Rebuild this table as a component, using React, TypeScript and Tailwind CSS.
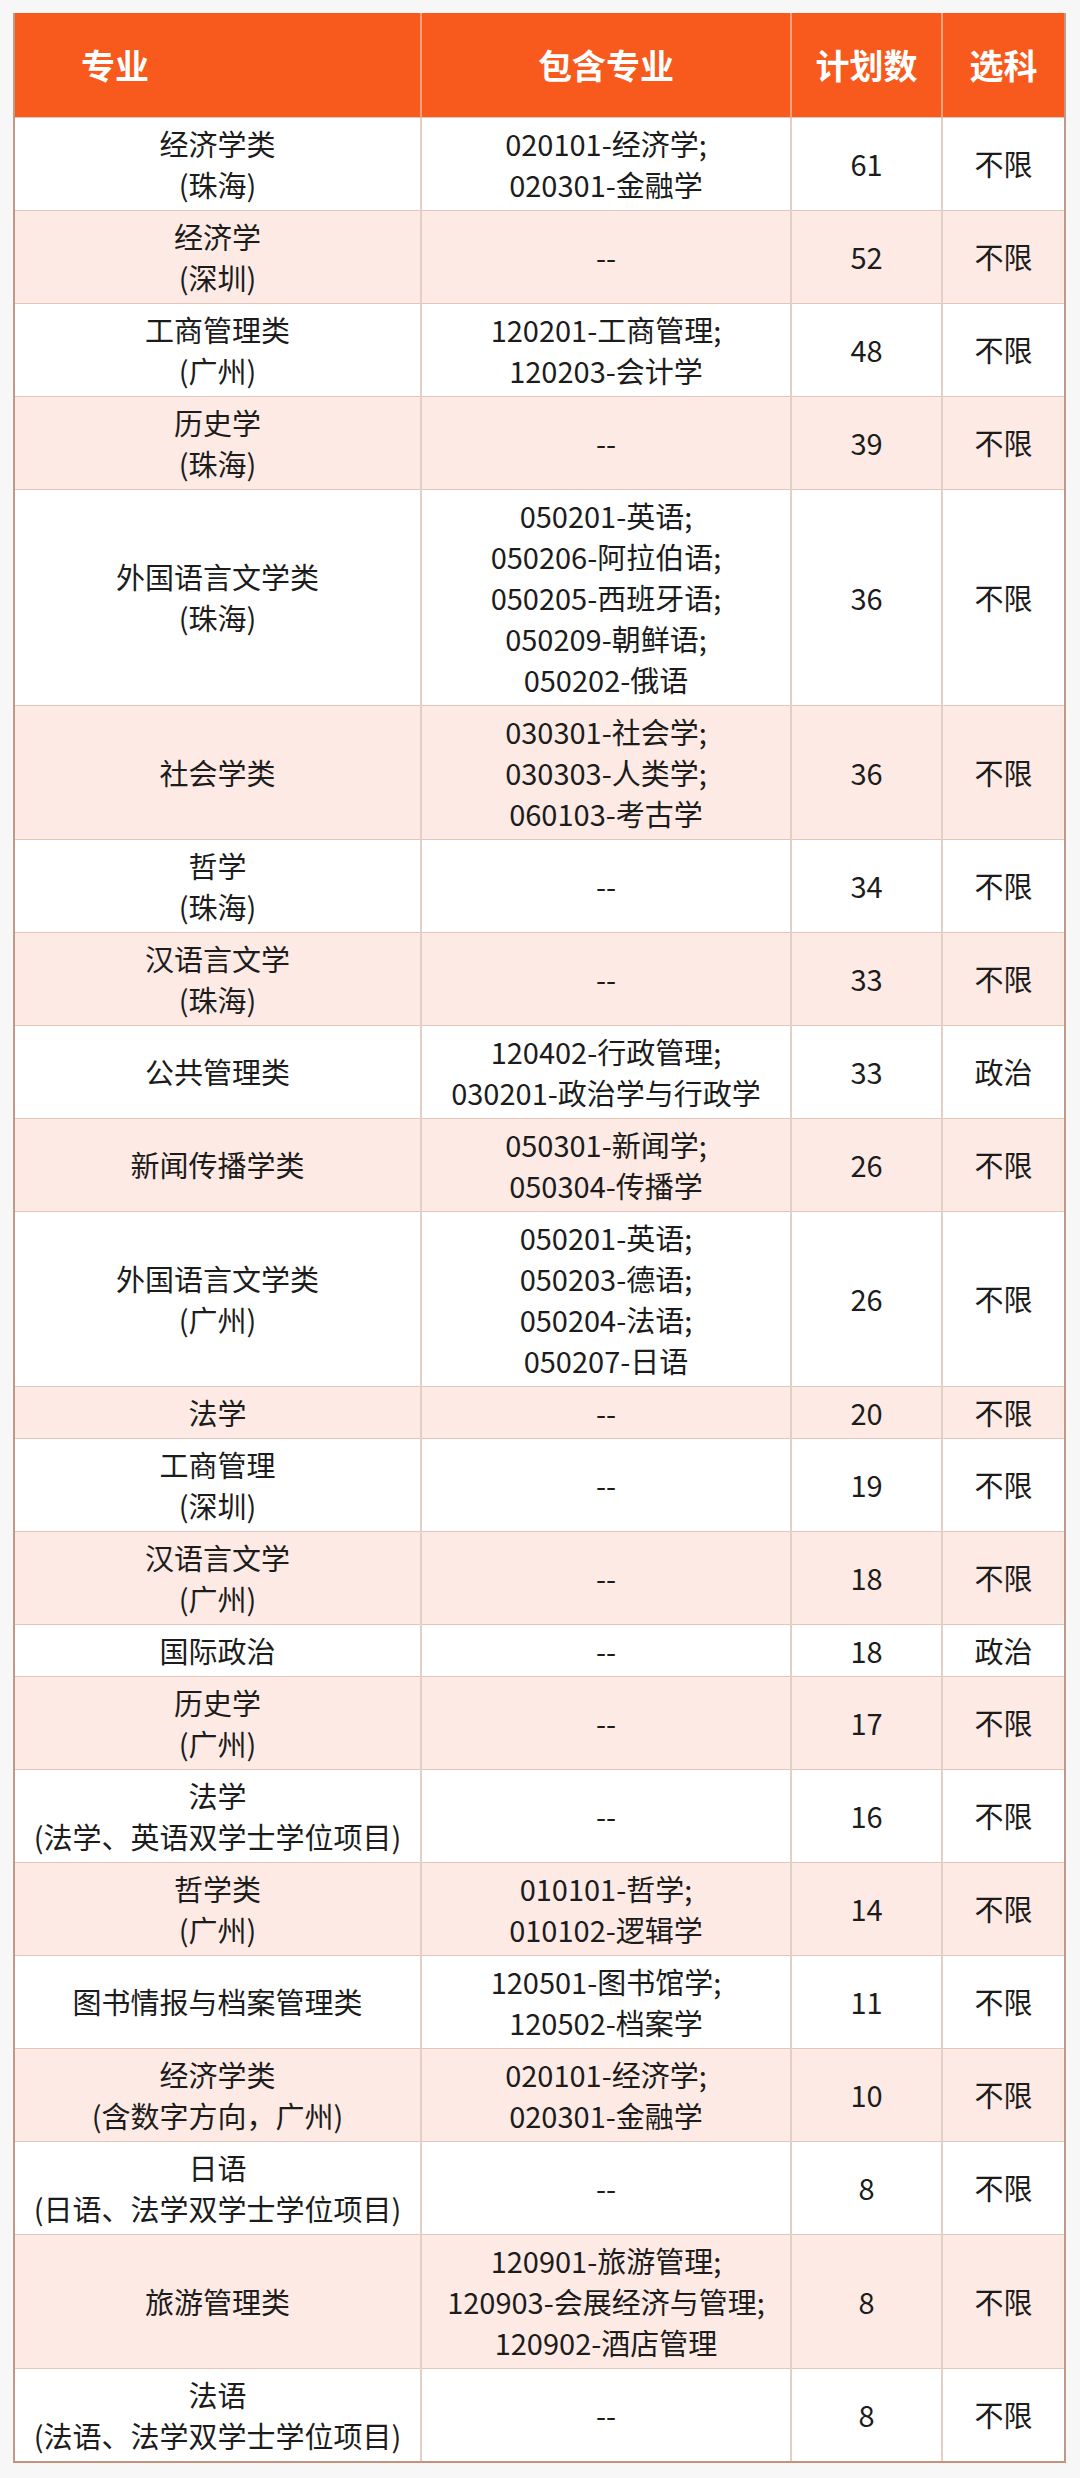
import React from "react";

type Row = { name: string[]; sub: string[]; n: string; xk: string };

const rows: Row[] = [
  { name: ["经济学类", "(珠海)"], sub: ["020101-经济学;", "020301-金融学"], n: "61", xk: "不限" },
  { name: ["经济学", "(深圳)"], sub: ["--"], n: "52", xk: "不限" },
  { name: ["工商管理类", "(广州)"], sub: ["120201-工商管理;", "120203-会计学"], n: "48", xk: "不限" },
  { name: ["历史学", "(珠海)"], sub: ["--"], n: "39", xk: "不限" },
  {
    name: ["外国语言文学类", "(珠海)"],
    sub: ["050201-英语;", "050206-阿拉伯语;", "050205-西班牙语;", "050209-朝鲜语;", "050202-俄语"],
    n: "36",
    xk: "不限",
  },
  { name: ["社会学类"], sub: ["030301-社会学;", "030303-人类学;", "060103-考古学"], n: "36", xk: "不限" },
  { name: ["哲学", "(珠海)"], sub: ["--"], n: "34", xk: "不限" },
  { name: ["汉语言文学", "(珠海)"], sub: ["--"], n: "33", xk: "不限" },
  { name: ["公共管理类"], sub: ["120402-行政管理;", "030201-政治学与行政学"], n: "33", xk: "政治" },
  { name: ["新闻传播学类"], sub: ["050301-新闻学;", "050304-传播学"], n: "26", xk: "不限" },
  {
    name: ["外国语言文学类", "(广州)"],
    sub: ["050201-英语;", "050203-德语;", "050204-法语;", "050207-日语"],
    n: "26",
    xk: "不限",
  },
  { name: ["法学"], sub: ["--"], n: "20", xk: "不限" },
  { name: ["工商管理", "(深圳)"], sub: ["--"], n: "19", xk: "不限" },
  { name: ["汉语言文学", "(广州)"], sub: ["--"], n: "18", xk: "不限" },
  { name: ["国际政治"], sub: ["--"], n: "18", xk: "政治" },
  { name: ["历史学", "(广州)"], sub: ["--"], n: "17", xk: "不限" },
  { name: ["法学", "(法学、英语双学士学位项目)"], sub: ["--"], n: "16", xk: "不限" },
  { name: ["哲学类", "(广州)"], sub: ["010101-哲学;", "010102-逻辑学"], n: "14", xk: "不限" },
  { name: ["图书情报与档案管理类"], sub: ["120501-图书馆学;", "120502-档案学"], n: "11", xk: "不限" },
  { name: ["经济学类", "(含数字方向，广州)"], sub: ["020101-经济学;", "020301-金融学"], n: "10", xk: "不限" },
  { name: ["日语", "(日语、法学双学士学位项目)"], sub: ["--"], n: "8", xk: "不限" },
  {
    name: ["旅游管理类"],
    sub: ["120901-旅游管理;", "120903-会展经济与管理;", "120902-酒店管理"],
    n: "8",
    xk: "不限",
  },
  { name: ["法语", "(法语、法学双学士学位项目)"], sub: ["--"], n: "8", xk: "不限" },
];

export default function App() {
  return (
    <div
      className="min-h-[2478px] w-[1080px] bg-[#f7f7f7] pt-[13px] pl-[13px]"
      style={{ fontFamily: '"Noto Sans CJK SC", "Noto Sans", sans-serif' }}
    >
      <div className="w-[1053px] border-x-2 border-b-2 border-x-[#bf9a88] border-b-[#c4917b] bg-white">
        <table className="w-full table-fixed border-collapse">
          <colgroup>
            <col className="w-[406px]" />
            <col className="w-[370px]" />
            <col className="w-[151px]" />
            <col className="w-[122px]" />
          </colgroup>
          <thead>
            <tr className="h-[104px] bg-[#f75a1c] text-[34px] font-bold text-white">
              <th className="pl-[66px] text-left">专业</th>
              <th className="border-l-2 border-[#f9a27c] text-center">包含专业</th>
              <th className="border-l-2 border-[#f9a27c] text-center">计划数</th>
              <th className="border-l-2 border-[#f9a27c] text-center">选科</th>
            </tr>
          </thead>
          <tbody className="text-[29px] leading-[41px] text-[#1c1c1c]">
            {rows.map((r, i) => (
              <tr
                key={i}
                className={`${i % 2 === 1 ? "bg-[#fdeae4]" : "bg-white"} border-t border-[#e2c6b9]`}
              >
                <td className="py-[5px] text-center align-middle">
                  {r.name.map((t, j) => (
                    <div key={j} className="whitespace-nowrap">
                      {t}
                    </div>
                  ))}
                </td>
                <td className="border-l-2 border-[#e2cfc6] py-[5px] text-center align-middle">
                  {r.sub.map((t, j) => (
                    <div key={j} className="whitespace-nowrap">
                      {t}
                    </div>
                  ))}
                </td>
                <td className="border-l-2 border-[#e2cfc6] py-[5px] text-center align-middle">{r.n}</td>
                <td className="border-l-2 border-[#e2cfc6] py-[5px] text-center align-middle">{r.xk}</td>
              </tr>
            ))}
          </tbody>
        </table>
      </div>
    </div>
  );
}
